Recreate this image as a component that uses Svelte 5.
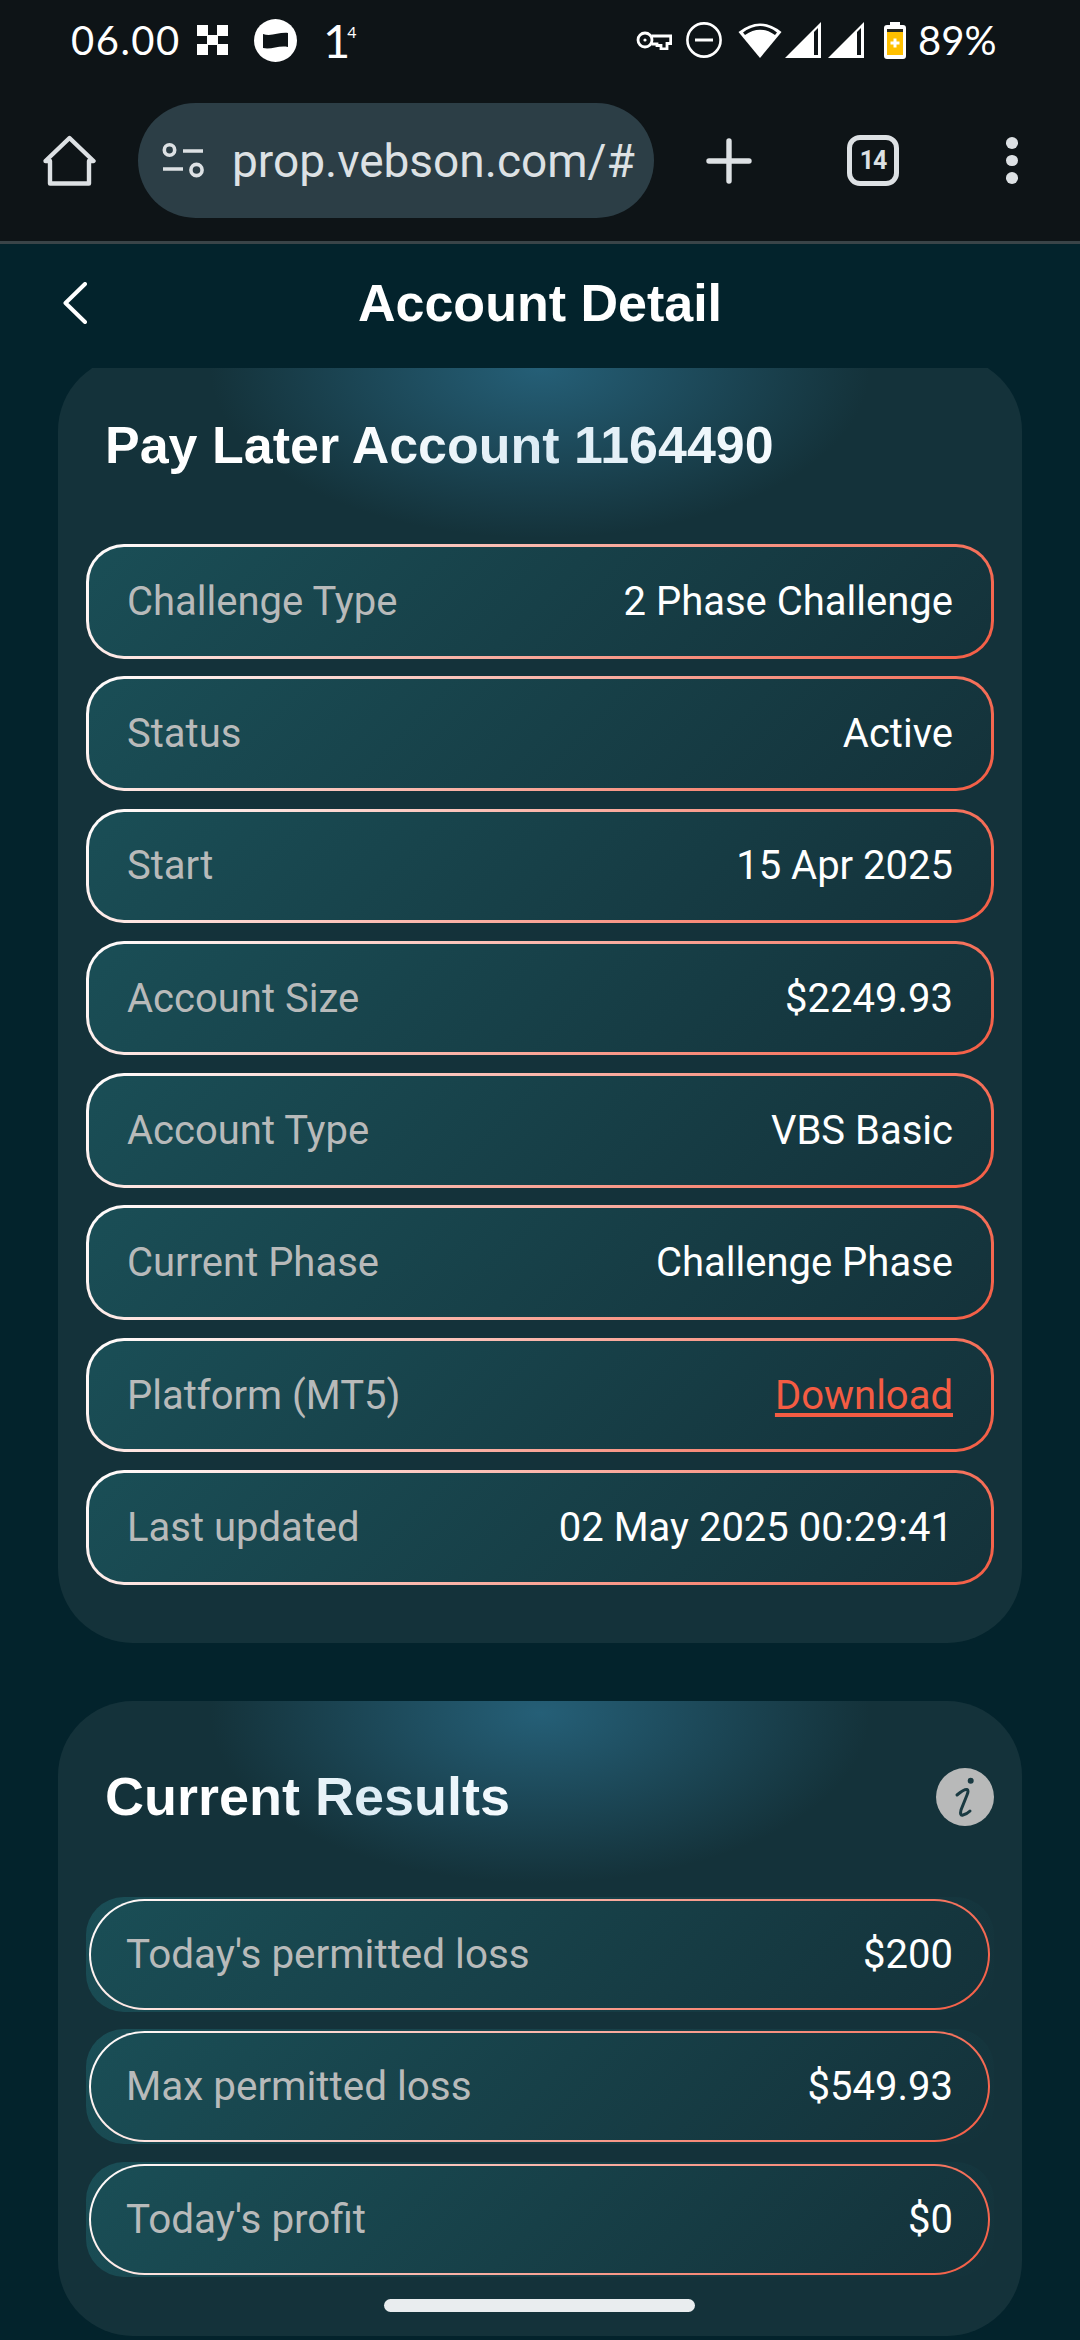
<script>
  const details = [
    { label: "Challenge Type", value: "2 Phase Challenge" },
    { label: "Status", value: "Active" },
    { label: "Start", value: "15 Apr 2025" },
    { label: "Account Size", value: "$2249.93" },
    { label: "Account Type", value: "VBS Basic" },
    { label: "Current Phase", value: "Challenge Phase" },
    { label: "Platform (MT5)", value: "Download", link: true },
    { label: "Last updated", value: "02 May 2025 00:29:41" },
  ];

  const results = [
    { label: "Today's permitted loss", value: "$200" },
    { label: "Max permitted loss", value: "$549.93" },
    { label: "Today's profit", value: "$0" },
  ];
</script>

<div class="screen">
  <div class="status">
    <span class="time">06.00</span>
    <svg class="checker" viewBox="0 0 31 30" fill="#fff">
      <rect width="11" height="11" /><rect x="20" width="11" height="11" />
      <rect x="10" y="10" width="11" height="10" />
      <rect y="19" width="11" height="11" /><rect x="20" y="19" width="11" height="11" />
    </svg>
    <svg class="flag" viewBox="0 0 43 43">
      <circle cx="21.5" cy="21.5" r="21.5" fill="#fff" />
      <path d="M9 15c8 3 16-2 25-1v14c-9-2-17 3-25 1z" fill="#0e1417" />
    </svg>
    <span class="one">1<sup>4</sup></span>

    <div class="status-right">
      <svg class="key" viewBox="0 0 36 20" fill="none" stroke="#fff" stroke-width="2.8">
        <circle cx="9" cy="10" r="7" />
        <circle cx="9" cy="10" r="1.6" fill="#fff" stroke="none" />
        <path d="M15.5 6H34.7V13.5H31V19H25V15.5H21V14H15.5" />
      </svg>
      <svg class="dnd" viewBox="0 0 36 36" fill="none" stroke="#fff" stroke-width="2.6">
        <circle cx="18" cy="18" r="16.6" />
        <path d="M9 18H27" stroke-width="3" />
      </svg>
      <svg class="wifi" viewBox="0 0 44 36">
        <path d="M22 36L.5 10Q22-7 43.5 10z" fill="#fff" />
        <path d="M5 10.5Q22-2.5 39 10.5L37 13Q22 2.5 7 13z" fill="#0e1417" />
      </svg>
      <svg class="signal" viewBox="0 0 36 36">
        <path d="M36 0V36H0z" fill="#fff" />
        <path d="M29 10L33 6V33H29z" fill="#0e1417" />
      </svg>
      <svg class="signal" viewBox="0 0 36 36">
        <path d="M36 0V36H0z" fill="#fff" />
        <path d="M29 10L33 6V33H29z" fill="#0e1417" />
      </svg>
      <svg class="battery" viewBox="0 0 22 37">
        <path d="M6 0h10v3h3a3 3 0 0 1 3 3v28a3 3 0 0 1-3 3H3a3 3 0 0 1-3-3V6a3 3 0 0 1 3-3h3z" fill="#fff" />
        <rect x="3" y="7" width="16" height="3" fill="#2a2a20" />
        <rect x="3" y="10" width="16" height="23" fill="#ffc000" />
        <path d="M11 16.5v9M6.5 21h9" stroke="#fff" stroke-width="3" />
      </svg>
      <span class="percent">89%</span>
    </div>
  </div>

  <div class="toolbar">
    <svg class="home" viewBox="0 0 53 51" fill="none" stroke="#dde1e4" stroke-width="4.4" stroke-linejoin="round">
      <path d="M7 26H2.5L26.5 3L50.5 26H46V48.5H7z" />
    </svg>
    <div class="url">
      <svg class="tune" viewBox="0 0 43 35" fill="none" stroke="#dde1e4" stroke-width="3.6">
        <circle cx="7.5" cy="7" r="5.2" />
        <path d="M21 8H41M1 26H21" />
        <circle cx="34.5" cy="27" r="5.6" />
      </svg>
      <span>prop.vebson.com/#</span>
    </div>
    <svg class="plus" viewBox="0 0 46 46" stroke="#dde1e4" stroke-width="5.4" stroke-linecap="round">
      <path d="M23 3V43M3 23H43" />
    </svg>
    <div class="tabs">14</div>
    <div class="dots"><i></i><i></i><i></i></div>
  </div>

  <header class="page-head">
    <svg class="back" viewBox="0 0 24 42" fill="none" stroke="#fff" stroke-width="4" stroke-linecap="round" stroke-linejoin="round">
      <path d="M22 2L2.5 21L22 40" />
    </svg>
    <h1>Account Detail</h1>
  </header>

  <main>
    <section class="card first">
      <div class="heading">
        <h2>Pay Later Account 1164490</h2>
      </div>
      <div class="rows">
        {#each details as row}
          <div class="row">
            <span class="label">{row.label}</span>
            {#if row.link}
              <a class="link" href="#download">{row.value}</a>
            {:else}
              <span class="value">{row.value}</span>
            {/if}
          </div>
        {/each}
      </div>
    </section>

    <section class="card second">
      <div class="heading">
        <h2>Current Results</h2>
        <svg class="info" viewBox="0 0 58 58">
          <circle cx="29" cy="29" r="29" fill="#b8b9b9" />
          <circle cx="34.7" cy="12.7" r="3" fill="#1a3a42" />
          <path d="M21 27Q28 21 31 21.5Q33 22 31 27L25 42Q23.5 48 27 47Q31 46 34 43" fill="none" stroke="#1a3a42" stroke-width="3" stroke-linecap="round" />
        </svg>
      </div>
      <div class="rows results">
        {#each results as row}
          <div class="result">
            <div class="pill">
              <span class="label">{row.label}</span>
              <span class="value">{row.value}</span>
            </div>
          </div>
        {/each}
      </div>
    </section>
  </main>

  <div class="home-bar"></div>
</div>

<style>
  :global(body) {
    background: #03232c;
  }

  .screen {
    position: relative;
    width: 1080px;
    height: 2340px;
    display: flex;
    flex-direction: column;
    overflow: hidden;
    background: #03232c;
    font-family: Roboto, "Liberation Sans", sans-serif;
  }

  .status {
    flex: none;
    height: 80px;
    display: flex;
    align-items: center;
    padding: 0 83px 0 71px;
    background: #0e1417;
    color: #fff;
    font-family: Lato, "Noto Sans", sans-serif;
  }

  .time {
    width: 109px;
    font-size: 40px;
    letter-spacing: 1.5px;
    line-height: 1;
  }

  .checker {
    width: 31px;
    height: 30px;
    margin-left: 17px;
  }

  .flag {
    width: 43px;
    height: 43px;
    margin-left: 26px;
  }

  .one {
    margin-left: 26px;
    font-size: 47px;
    line-height: 1;
  }

  .one sup {
    margin-left: -3px;
    font-size: 16px;
    vertical-align: 20px;
    line-height: 0;
  }

  .status-right {
    margin-left: auto;
    display: flex;
    align-items: center;
  }

  .key {
    width: 36px;
    height: 20px;
  }

  .dnd {
    width: 36px;
    height: 36px;
    margin-left: 14px;
  }

  .wifi {
    width: 44px;
    height: 36px;
    margin-left: 16px;
  }

  .signal {
    width: 36px;
    height: 36px;
    margin-left: 3px;
  }

  .signal + .signal {
    margin-left: 7px;
  }

  .battery {
    width: 22px;
    height: 37px;
    margin-left: 20px;
  }

  .percent {
    width: 79px;
    margin-left: 12px;
    font-size: 40px;
    line-height: 1;
    white-space: nowrap;
  }

  .toolbar {
    flex: none;
    height: 161px;
    display: flex;
    align-items: center;
    padding-left: 43px;
    background: #0e1417;
    border-bottom: 3px solid #3a4448;
    color: #dde1e4;
  }

  .home {
    flex: none;
    width: 53px;
    height: 51px;
  }

  .url {
    flex: none;
    width: 516px;
    height: 115px;
    margin-left: 42px;
    padding-left: 24px;
    box-sizing: border-box;
    display: flex;
    align-items: center;
    gap: 27px;
    border-radius: 58px;
    background: #2c3e46;
    font-size: 46px;
    white-space: nowrap;
    overflow: hidden;
  }

  .tune {
    flex: none;
    width: 43px;
    height: 35px;
  }

  .plus {
    flex: none;
    width: 46px;
    height: 46px;
    margin-left: 52px;
  }

  .tabs {
    flex: none;
    width: 52px;
    height: 51px;
    margin-left: 95px;
    box-sizing: border-box;
    display: flex;
    align-items: center;
    justify-content: center;
    border: 5px solid #dde1e4;
    border-radius: 13px;
    font-size: 25px;
    font-weight: 700;
    letter-spacing: -1px;
  }

  .dots {
    flex: none;
    margin-left: 107px;
    display: flex;
    flex-direction: column;
    gap: 6px;
  }

  .dots i {
    width: 12px;
    height: 11.5px;
    border-radius: 50%;
    background: #dde1e4;
  }

  .page-head {
    position: relative;
    flex: none;
    height: 124px;
    display: flex;
    align-items: center;
    justify-content: center;
    padding-bottom: 6px;
    box-sizing: border-box;
  }

  .back {
    position: absolute;
    left: 63px;
    top: 38px;
    width: 24px;
    height: 42px;
  }

  h1 {
    margin: 0;
    color: #fff;
    font-family: "Liberation Sans", Arial, sans-serif;
    font-size: 52px;
    font-weight: 700;
    line-height: 1;
  }

  main {
    flex: 1;
    min-height: 0;
    overflow: hidden;
  }

  .card {
    margin: 0 58px;
    padding: 0 28px;
    border-radius: 75px;
    background:
      radial-gradient(ellipse 330px 170px at 50% 12px, #255f77 0%, rgb(37 95 119 / 0.55) 45%, transparent 100%),
      #14323a;
  }

  .first {
    margin-top: -12px;
    padding-bottom: 58px;
  }

  .second {
    margin-top: 58px;
    padding-bottom: 59px;
  }

  .heading {
    height: 76px;
    display: flex;
    align-items: center;
    justify-content: space-between;
    padding-left: 19px;
  }

  .first .heading {
    padding-top: 52px;
    margin-bottom: 60px;
  }

  .second .heading {
    padding-top: 58px;
    margin-bottom: 62px;
  }

  h2 {
    margin: 0;
    font-family: "Liberation Sans", Arial, sans-serif;
    font-size: 52px;
    font-weight: 700;
    line-height: 1.1;
    color: transparent;
    background: linear-gradient(90deg, #fff 35%, #dcecf5 65%, #f6fbfe 100%);
    background-clip: text;
    -webkit-background-clip: text;
  }

  .second h2 {
    font-size: 54px;
  }

  .info {
    width: 58px;
    height: 58px;
  }

  .rows {
    display: flex;
    flex-direction: column;
    gap: 17.8px;
  }

  .row {
    height: 114.5px;
    box-sizing: border-box;
    display: flex;
    align-items: center;
    justify-content: space-between;
    padding: 0 38px;
    border: 3px solid transparent;
    border-radius: 38px;
    background:
      linear-gradient(135deg, #1a4e56, #14323a) padding-box,
      linear-gradient(135deg, #fff, #f45c43) border-box;
  }

  .label {
    color: #b8baba;
    font-size: 40px;
  }

  .value {
    color: #fff;
    font-size: 40px;
  }

  .link {
    color: #f45c43;
    font-size: 40px;
    text-decoration: underline;
    text-decoration-thickness: 4px;
    text-underline-offset: 4px;
  }

  .results {
    gap: 17.5px;
  }

  .results .label {
    font-size: 40.4px;
  }

  .result {
    height: 115px;
    box-sizing: border-box;
    padding: 2px 4px 2px 3px;
    border-radius: 38px;
    background: linear-gradient(135deg, #1a4e56, #14323a);
  }

  .pill {
    height: 100%;
    box-sizing: border-box;
    display: flex;
    align-items: center;
    justify-content: space-between;
    padding: 0 35px;
    border: 2px solid transparent;
    border-radius: 56px;
    background:
      linear-gradient(135deg, #1a4e56, #14323a) padding-box,
      linear-gradient(135deg, #fff, #f45c43) border-box;
  }

  .home-bar {
    position: absolute;
    left: 384px;
    top: 2299px;
    width: 311px;
    height: 13px;
    border-radius: 7px;
    background: #e9edef;
  }
</style>
